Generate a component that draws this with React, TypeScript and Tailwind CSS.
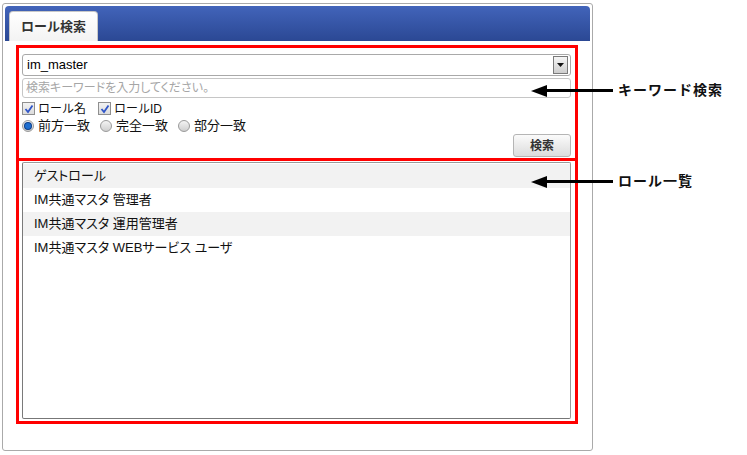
import React from "react";

const roles = [
  "ゲストロール",
  "IM共通マスタ 管理者",
  "IM共通マスタ 運用管理者",
  "IM共通マスタ WEBサービス ユーザ",
];

function CheckBox({ label }: { label: string }) {
  return (
    <label className="flex items-center gap-[3px] mr-[12px]">
      <span className="w-[13px] h-[13px] border border-[#8f8f8f] bg-gradient-to-b from-[#f2f2f2] to-[#dcdcdc] flex items-center justify-center">
        <svg width="10" height="10" viewBox="0 0 10 10">
          <path d="M1.5 5 L4 8 L8.5 1.5" stroke="#2f55c8" strokeWidth="1.8" fill="none" />
        </svg>
      </span>
      <span>{label}</span>
    </label>
  );
}

function Radio({ label, checked }: { label: string; checked?: boolean }) {
  return (
    <label className="flex items-center gap-[4px] mr-[10px] text-[13px]">
      <span className="w-[12px] h-[12px] rounded-full border border-[#9a9a9a] bg-gradient-to-b from-[#f4f4f4] to-[#cfcfcf] flex items-center justify-center">
        {checked && <span className="w-[6px] h-[6px] rounded-full bg-[#1f6fd0] ring-1 ring-[#0d3f8a]" />}
      </span>
      <span>{label}</span>
    </label>
  );
}

function Callout({ top, label }: { top: string; label: string }) {
  return (
    <div className={`absolute left-[531px] ${top} flex items-center`}>
      <svg width="16" height="12" viewBox="0 0 16 12">
        <path d="M0 6 L16 0 L16 12 Z" fill="#000" />
      </svg>
      <div className="w-[66px] h-[3px] bg-black" />
      <span className="ml-[5px] text-[14px] font-bold tracking-[1px] text-[#111]">{label}</span>
    </div>
  );
}

export default function App() {
  return (
    <div className="relative w-[747px] h-[455px] bg-white font-['Liberation_Sans','Noto_Sans_CJK_JP',sans-serif] text-[12px] text-[#111]">
      <div className="absolute left-[2px] top-[3px] w-[591px] h-[448px] border border-[#aaaaaa] rounded-[3px] p-[2px] flex flex-col">
        {/* header */}
        <div className="h-[35px] rounded-t-[4px] bg-gradient-to-b from-[#4264ba] to-[#2b4894] flex items-end pl-[4px]">
          <div className="h-[30px] px-[11px] bg-gradient-to-b from-[#ffffff] to-[#f3f3f3] border border-b-0 border-[#c8c8c8] rounded-t-[4px] flex items-center text-[13px] font-bold text-[#333]">
            ロール検索
          </div>
        </div>

        <div className="pl-[11px] pt-[4px] flex flex-col">
          {/* search form */}
          <div className="w-[562px] h-[116px] border-[3px] border-[#ff0000] pl-[3px] pr-[4px] pt-[6px] flex flex-col">
            <div className="h-[22px] border border-[#a9a9a9] rounded-[3px] flex items-center justify-between pl-[4px] pr-[2px]">
              <span className="text-[13px] text-black">im_master</span>
              <span className="w-[15px] h-[18px] border border-[#7a7a7a] bg-gradient-to-b from-[#f5f5f5] to-[#cdcdcd] flex items-center justify-center">
                <svg width="7" height="4" viewBox="0 0 7 4">
                  <path d="M0 0 L7 0 L3.5 4 Z" fill="#111" />
                </svg>
              </span>
            </div>
            <div className="mt-[2px] h-[20px] border border-[#c6c6c6] rounded-[3px] flex items-center pl-[3px] text-[12px] text-[#a6a6a6] [font-feature-settings:'palt']">
              検索キーワードを入力してください。
            </div>
            <div className="mt-[3px] h-[15px] flex items-center">
              <CheckBox label="ロール名" />
              <CheckBox label="ロールID" />
            </div>
            <div className="mt-[2px] h-[15px] flex items-center">
              <Radio label="前方一致" checked />
              <Radio label="完全一致" />
              <Radio label="部分一致" />
            </div>
            <div className="mt-[1px] flex justify-end">
              <button className="w-[58px] h-[23px] border border-[#b5b5b5] rounded-[3px] bg-gradient-to-b from-[#fbfbfb] to-[#dcdcdc] text-[12px] font-bold text-[#333]">
                検索
              </button>
            </div>
          </div>

          {/* role list */}
          <div className="w-[562px] h-[263px] border-[3px] border-t-0 border-[#ff0000] pl-[3px] pr-[4px] pt-[1px] pb-[2px] flex">
            <div className="flex-1 border border-[#9a9a9a] border-l-[#7a7a7a] border-b-[#777] rounded-[2px] pt-[1px] flex flex-col text-[13px] [font-feature-settings:'palt']">
              {roles.map((r, i) => (
                <div
                  key={r}
                  className={`h-[24px] flex items-center pl-[11px] ${i % 2 === 0 ? "bg-[#f2f2f2]" : "bg-white"}`}
                >
                  {r}
                </div>
              ))}
            </div>
          </div>
        </div>
      </div>

      <Callout top="top-[80px]" label="キーワード検索" />
      <Callout top="top-[171px]" label="ロール一覧" />
    </div>
  );
}
